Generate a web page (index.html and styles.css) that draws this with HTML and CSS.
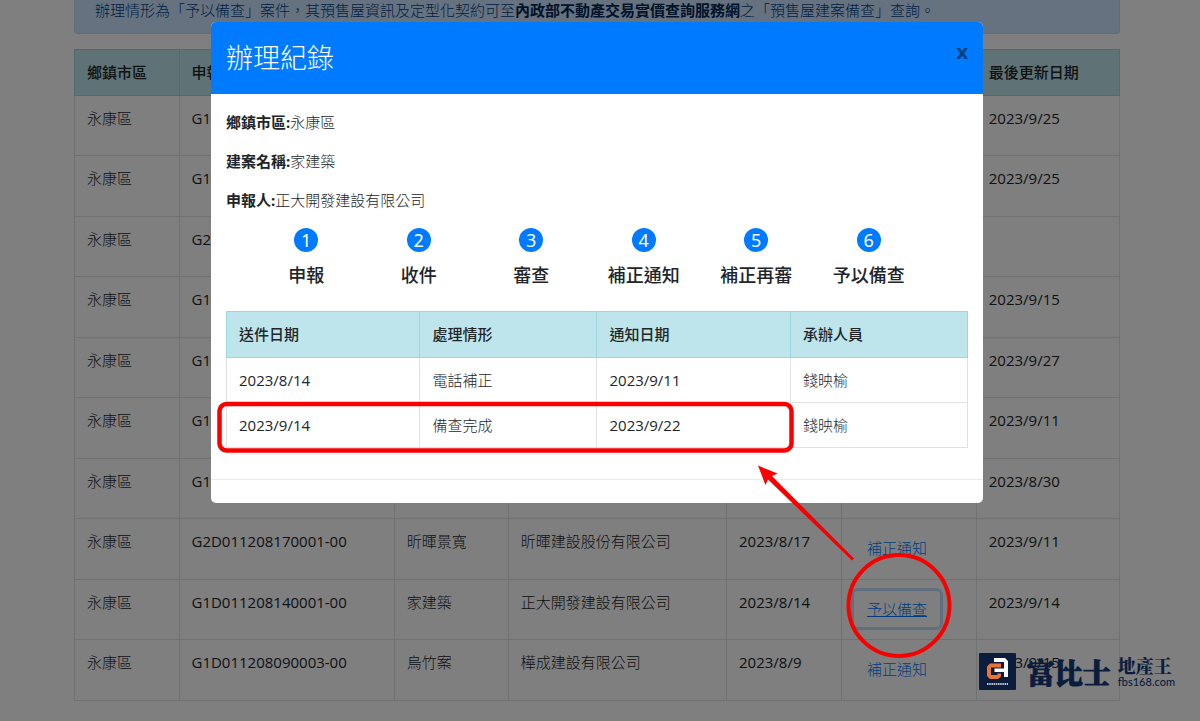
FILE: index.html
```html
<!DOCTYPE html>
<html lang="zh-Hant">
<head>
<meta charset="utf-8">
<title>辦理紀錄</title>
<link rel="stylesheet" href="styles.css">
</head>
<body>
<main class="page">
  <div class="alert">辦理情形為「予以備查」案件，其預售屋資訊及定型化契約可至<strong>內政部不動產交易實價查詢服務網</strong>之「預售屋建案備查」查詢。</div>
  <table class="table cases">
    <colgroup><col class="c-area"><col class="c-no"><col class="c-name"><col class="c-firm"><col class="c-date"><col class="c-state"><col></colgroup>
    <thead>
      <tr><th>鄉鎮市區</th><th>申報</th><th></th><th></th><th></th><th></th><th>最後更新日期</th></tr>
    </thead>
    <tbody>
      <tr><td>永康區</td><td class="num">G1</td><td></td><td></td><td></td><td></td><td class="num">2023/9/25</td></tr>
      <tr><td>永康區</td><td class="num">G1</td><td></td><td></td><td></td><td></td><td class="num">2023/9/25</td></tr>
      <tr><td>永康區</td><td class="num">G2</td><td></td><td></td><td></td><td></td><td class="num"></td></tr>
      <tr><td>永康區</td><td class="num">G1</td><td></td><td></td><td></td><td></td><td class="num">2023/9/15</td></tr>
      <tr><td>永康區</td><td class="num">G1</td><td></td><td></td><td></td><td></td><td class="num">2023/9/27</td></tr>
      <tr><td>永康區</td><td class="num">G1</td><td></td><td></td><td></td><td></td><td class="num">2023/9/11</td></tr>
      <tr><td>永康區</td><td class="num">G1</td><td></td><td></td><td></td><td></td><td class="num">2023/8/30</td></tr>
      <tr><td>永康區</td><td class="num">G2D011208170001-00</td><td>昕暉景寬</td><td>昕暉建設股份有限公司</td><td class="num">2023/8/17</td><td><button type="button" class="state">補正通知</button></td><td class="num">2023/9/11</td></tr>
      <tr><td>永康區</td><td class="num">G1D011208140001-00</td><td>家建築</td><td>正大開發建設有限公司</td><td class="num">2023/8/14</td><td><button type="button" class="state state-active">予以備查</button></td><td class="num">2023/9/14</td></tr>
      <tr><td>永康區</td><td class="num">G1D011208090003-00</td><td>烏竹案</td><td>樺成建設有限公司</td><td class="num">2023/8/9</td><td><button type="button" class="state">補正通知</button></td><td class="num">2023/9/15</td></tr>
    </tbody>
  </table>
</main>

<div class="backdrop">
  <section class="modal" role="dialog" aria-labelledby="modal-title">
    <header class="modal-header">
      <h2 class="modal-title" id="modal-title">辦理紀錄</h2>
      <button type="button" class="close">x</button>
    </header>
    <div class="modal-body">
      <p><b>鄉鎮市區:</b>永康區</p>
      <p><b>建案名稱:</b>家建築</p>
      <p><b>申報人:</b>正大開發建設有限公司</p>
      <ol class="steps">
        <li><span class="dot">1</span><span>申報</span></li>
        <li><span class="dot">2</span><span>收件</span></li>
        <li><span class="dot">3</span><span>審查</span></li>
        <li><span class="dot">4</span><span>補正通知</span></li>
        <li><span class="dot">5</span><span>補正再審</span></li>
        <li><span class="dot">6</span><span>予以備查</span></li>
      </ol>
      <table class="table records">
        <colgroup><col class="r-wide"><col class="r-narrow"><col class="r-wide"><col></colgroup>
        <thead>
          <tr><th>送件日期</th><th>處理情形</th><th>通知日期</th><th>承辦人員</th></tr>
        </thead>
        <tbody>
          <tr><td class="num">2023/8/14</td><td>電話補正</td><td class="num">2023/9/11</td><td>錢映榆</td></tr>
          <tr><td class="num">2023/9/14</td><td>備查完成</td><td class="num">2023/9/22</td><td>錢映榆</td></tr>
        </tbody>
      </table>
    </div>
    <footer class="modal-footer"></footer>
  </section>
</div>

<svg class="marks" width="1200" height="721" viewBox="0 0 1200 721" aria-hidden="true">
  <rect x="219.500" y="404" width="572" height="46.500" rx="7" fill="none" stroke="#f80000" stroke-width="4.500"/>
  <circle cx="899" cy="605.500" r="50.500" fill="none" stroke="#f80000" stroke-width="4"/>
  <path d="M758 465.500 L777.500 473.500 L772 476 L854 558.500 L852 560.500 L768 479.500 L765.500 485 Z" fill="#f80000"/>
</svg>

<div class="brand">
  <svg class="brand-mark" width="37" height="37" viewBox="0 0 37 37" aria-hidden="true">
    <rect width="37" height="37" rx="1" fill="#0b1c3c"/>
    <path d="M22 10.500 H11 L8 13.500 V23 L11 26 H19 L22 23.500 V20.500 H18.500 V22 H12 V14.500 H22 Z" fill="#ec7432"/>
    <path d="M15 5 H26 L29 8 V24 H25 V19 H15.500 V15.500 H25 V9 H15 Z" fill="#fff"/>
    <path d="M8 31 H29" stroke="#fff" stroke-width="1.500" stroke-dasharray="1.500 .7"/>
  </svg>
  <span class="brand-name">富比士</span>
  <span class="brand-side"><span class="brand-sub">地產王</span><span class="brand-url">fbs168.com</span></span>
</div>
</body>
</html>
```
FILE: styles.css
```css
* { box-sizing: border-box; }

body {
  margin: 0;
  background: #fff;
  color: #212529;
  font: 300 15px/23px "Noto Sans", "Noto Sans CJK TC", sans-serif;
}

button { font: inherit; }

.page { padding: 0 80px 21px 74px; }

.alert {
  margin-bottom: 15px;
  padding: 0 20px 12px;
  border: 1px solid #b8daff;
  border-top: 0;
  border-radius: 0 0 4px 4px;
  background: #cce5ff;
  color: #004085;
  line-height: 21px;
  white-space: nowrap;
}
.alert strong { color: #002752; font-weight: 700; }

.table {
  width: 100%;
  border-collapse: collapse;
  table-layout: fixed;
}
.table th, .table td {
  padding: 11px 12px;
  border: 1px solid #dee2e6;
  text-align: left;
  vertical-align: top;
  white-space: nowrap;
}
.table th {
  border-color: #9bd7e0;
  background: #bee5eb;
  font-weight: 500;
}
.table .num { font-family: "Open Sans", sans-serif; font-weight: 400; }

.cases tbody tr { height: 60px; }
.cases tbody tr:nth-child(even) { height: 61px; }
.c-area { width: 10%; }
.c-no { width: 20.6%; }
.c-name { width: 10.9%; }
.c-firm { width: 20.9%; }
.c-date { width: 11%; }
.c-state { width: 12.9%; }

.state {
  padding: 6px 12px;
  border: 1px solid transparent;
  border-radius: 4px;
  background: none;
  color: #007bff;
  line-height: 22px;
}
.state-active {
  box-shadow: 0 0 0 3px rgba(0, 123, 255, .25);
  text-decoration: underline;
}

.backdrop {
  position: absolute;
  inset: 0;
  padding: 22px 217px 0 211px;
  background: rgba(0, 0, 0, .5);
}

.modal {
  border-radius: 5px;
  background: #fff;
}
.modal-header {
  display: flex;
  justify-content: space-between;
  align-items: flex-start;
  padding: 16px 15px;
  border-radius: 5px 5px 0 0;
  background: #007bff;
}
.modal-title {
  margin: 0;
  color: #fff;
  font-size: 27px;
  font-weight: 300;
  line-height: 40px;
}
.close {
  padding: 0;
  border: 0;
  background: none;
  color: #003f80;
  font-size: 20px;
  font-weight: 700;
  line-height: 28px;
}

.modal-body { padding: 17px 15px 31px; }
.modal-body p { margin: 0 0 16px; }
.modal-body b { font-weight: 700; }

.steps {
  display: flex;
  margin: 0 0 22px;
  padding: 0 43px 0 24px;
  list-style: none;
  font-size: 18px;
  font-weight: 500;
}
.steps li {
  flex: 1;
  display: flex;
  flex-direction: column;
  align-items: center;
  gap: 10px;
  line-height: 27px;
}
.dot {
  width: 24px;
  height: 24px;
  border-radius: 50%;
  background: #007bff;
  color: #fff;
  font-weight: 400;
  line-height: 24px;
  text-align: center;
}

.records td { padding: 11px 12px 10px; }
.r-wide { width: 26.1%; }
.r-narrow { width: 23.9%; }

.modal-footer {
  height: 24px;
  border-top: 1px solid #e9ecef;
}

.marks {
  position: absolute;
  top: 0;
  left: 0;
  pointer-events: none;
}

.brand {
  position: absolute;
  right: 25px;
  bottom: 31px;
  display: flex;
  align-items: center;
  color: #0b1c3c;
}
.brand-mark { margin-right: 11px; }
.brand-name {
  margin-right: 7px;
  font: 900 28px/36px "Noto Serif CJK TC", "Noto Sans CJK TC", serif;
  -webkit-text-stroke: 1px #0b1c3c;
}
.brand-side { display: flex; flex-direction: column; }
.brand-sub { font: 900 18px/20px "Noto Serif CJK TC", "Noto Sans CJK TC", serif; }
.brand-url { font: 500 11px/14px Lato, sans-serif; }
```
